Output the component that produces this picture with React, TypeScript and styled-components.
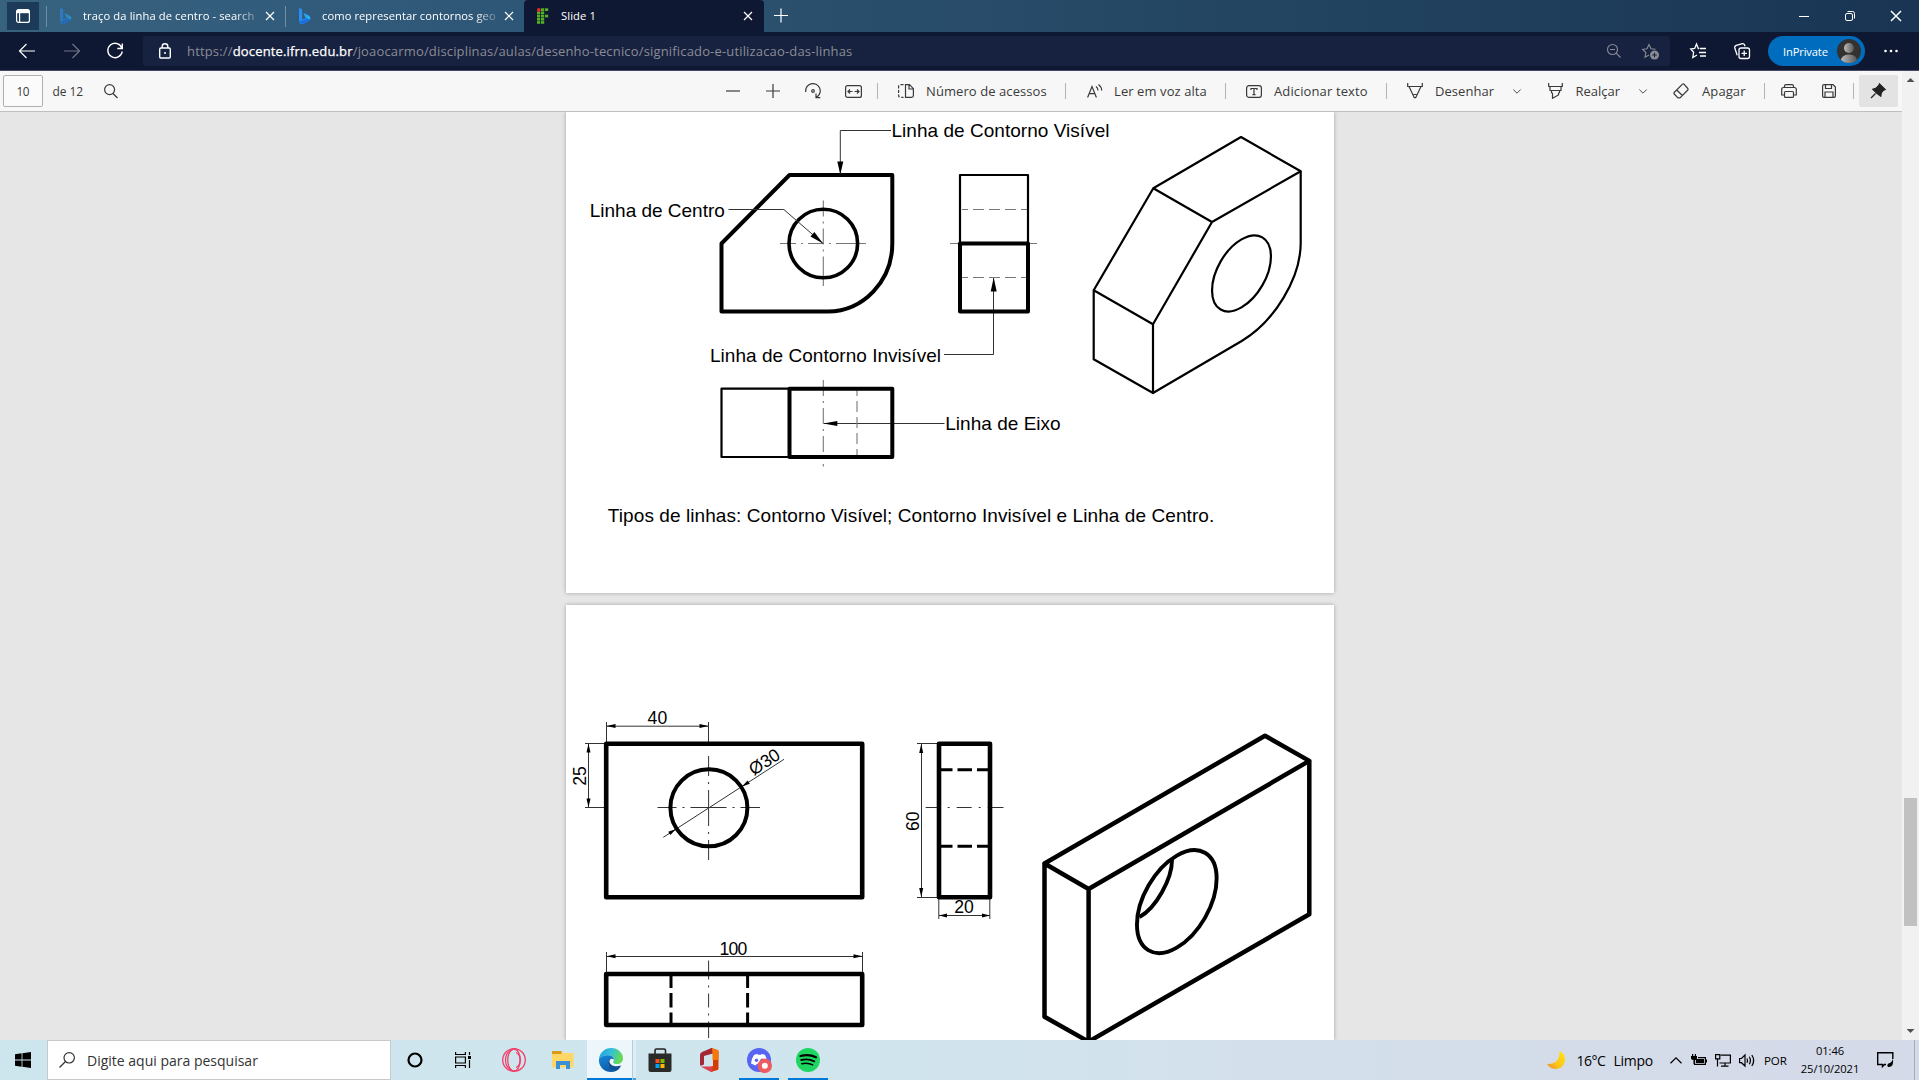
import React from "react";
import styled, { createGlobalStyle } from "styled-components";

const GlobalStyle = createGlobalStyle`
  *, *::before, *::after { box-sizing: border-box; }
  html, body { margin: 0; padding: 0; height: 100%; overflow: hidden; }
  body { font-family: "Segoe UI", "Open Sans", "Noto Sans", sans-serif; }
  svg { display: block; flex: none; }
`;

const Screen = styled.div`
  display: flex;
  flex-direction: column;
  width: 1919px;
  height: 1080px;
  overflow: hidden;
  background: #e6e6e6;
`;

/* ---------- generic parts ---------- */

const Glyph = styled.svg<{ $ml?: number; $sw?: number }>`
  margin-left: ${(p) => p.$ml ?? 0}px;
  fill: none;
  stroke: currentColor;
  stroke-width: ${(p) => p.$sw ?? 1.2};
  overflow: visible;
`;

const Label = styled.span<{ $w: number; $ml?: number; $ls?: number }>`
  flex: none;
  width: ${(p) => p.$w}px;
  margin-left: ${(p) => p.$ml ?? 0}px;
  letter-spacing: ${(p) => p.$ls ?? 0}px;
  white-space: nowrap;
`;

/* ---------- tab strip ---------- */

const TabStrip = styled.header`
  display: flex;
  flex: none;
  height: 32px;
  background: linear-gradient(90deg, #38637f 0%, #30597a 20%, #294e6b 45%, #21425f 72%, #1a3554 100%);
  color: #fff;
  font-size: 11.2px;
`;

const TabActions = styled.div`
  display: flex;
  align-items: center;
  justify-content: center;
  width: 32px;
  height: 28px;
  margin: 2px 7px 0 7px;
  background: #1c3b59;
`;

const Tab = styled.div<{ $w: number; $active?: boolean }>`
  display: flex;
  flex: none;
  align-items: center;
  width: ${(p) => p.$w}px;
  height: 32px;
  padding-left: 13px;
  background: ${(p) => (p.$active ? "#0f1833" : "transparent")};
  border-radius: ${(p) => (p.$active ? "4px 4px 0 0" : "0")};
`;

const TabDivider = styled.div`
  flex: none;
  width: 1px;
  height: 21px;
  margin-top: 6px;
  background: #6f8fa5;
`;

const TabTitle = styled(Label)<{ $fade?: boolean }>`
  line-height: 18px;
  mask-image: ${(p) => (p.$fade ? "linear-gradient(90deg, #000 88%, rgba(0, 0, 0, 0.2) 101%)" : "none")};
`;

const WindowButtons = styled.div`
  display: flex;
  align-items: center;
  gap: 36px;
  margin-left: auto;
  padding-right: 18px;
`;

/* ---------- address row ---------- */

const AddressRow = styled.div`
  display: flex;
  flex: none;
  align-items: center;
  height: 39px;
  padding: 0 21px 0 18px;
  background: #0f1833;
  border-bottom: 1px solid #464866;
  color: #fff;
`;

const AddressBox = styled.div`
  display: flex;
  align-items: center;
  width: 1527px;
  height: 30px;
  margin-left: 20px;
  padding: 0 11px 0 15px;
  border-radius: 3px;
  background: #172241;
  font-size: 13px;
`;

const Url = styled.div`
  margin: 0 auto 0 16px;
  color: #8b8c93;
  letter-spacing: 0.165px;
  white-space: nowrap;

  b { color: #fff; font-weight: 400; -webkit-text-stroke: 0.25px #fff; }
`;

const Profile = styled.div`
  display: flex;
  align-items: center;
  justify-content: space-between;
  width: 97px;
  height: 30px;
  margin-left: 18px;
  padding: 0 4px 0 15px;
  border-radius: 15px;
  background: #006cbe;
  font-size: 11.2px;
  letter-spacing: -0.15px;
`;

/* ---------- pdf toolbar ---------- */

const Viewer = styled.main`
  display: flex;
  flex: none;
  height: 969px;
`;

const Document = styled.section`
  display: flex;
  flex-direction: column;
  width: 1902px;
`;

const PdfBar = styled.div`
  display: flex;
  flex: none;
  align-items: center;
  height: 41px;
  padding: 0 4px 0 3px;
  border-bottom: 1px solid #bfbfbf;
  background: #f7f7f7;
  color: #3a3a3a;
  font-size: 13px;
  letter-spacing: 0.08px;
`;

const PageInput = styled.div`
  display: flex;
  align-items: center;
  justify-content: center;
  width: 40px;
  height: 32px;
  border: 1px solid #b0b0b0;
  border-radius: 2px;
  background: #fbfbfb;
  font-size: 11.8px;
  letter-spacing: -0.4px;
`;

const PageCount = styled(Label)`
  font-size: 12px;
`;

const Rule = styled.div<{ $ml: number }>`
  flex: none;
  width: 1px;
  height: 16px;
  margin-left: ${(p) => p.$ml}px;
  background: #b4b4b4;
`;

const PinButton = styled.div`
  display: flex;
  align-items: center;
  justify-content: center;
  width: 40px;
  height: 32px;
  margin-left: 5px;
  border-radius: 2px;
  background: #e3e3e3;
  color: #222;
`;

/* ---------- pages ---------- */

const Pages = styled.div`
  display: flex;
  flex: 1;
  flex-direction: column;
  gap: 12px;
  min-height: 0;
  overflow: hidden;
  padding-left: 566px;
  background: #e6e6e6;
`;

const Sheet = styled.article<{ $h: number }>`
  flex: none;
  width: 768px;
  height: ${(p) => p.$h}px;
  background: #fff;
  box-shadow: 0 0 4px rgba(0, 0, 0, 0.3);
`;

const Drawing = styled.svg`
  fill: none;
  stroke: #000;
  stroke-linejoin: round;

  text {
    fill: #000;
    stroke: none;
    font-family: Arial, "Liberation Sans", sans-serif;
  }
  .thin { stroke: #333; stroke-width: 1; }
  .axis { stroke: #777; stroke-width: 1.1; }
  .mid { stroke-width: 2.2; }
  .thick { stroke-width: 4; }
  .heavy { stroke-width: 4.6; }
  .head { fill: #000; stroke: none; }
`;

const Scrollbar = styled.aside`
  display: flex;
  flex-direction: column;
  align-items: center;
  width: 17px;
  padding: 7px 0 7px;
  background: #f1f1f1;
`;

const Thumb = styled.div`
  width: 13px;
  height: 128px;
  margin: 716px 0 auto;
  background: #c1c1c1;
`;

const Arrow = styled.div<{ $down?: boolean }>`
  width: 8px;
  height: 4px;
  background: #505050;
  clip-path: ${(p) => (p.$down ? "polygon(0 0, 100% 0, 50% 100%)" : "polygon(0 100%, 100% 100%, 50% 0)")};
`;

/* ---------- taskbar ---------- */

const Taskbar = styled.footer`
  display: flex;
  flex: none;
  align-items: center;
  height: 40px;
  background: linear-gradient(90deg, #cde6ee 0%, #d0e5ee 45%, #d3e0ec 65%, #d4dbe9 85%, #d5dae9 100%);
  color: #000;
  font-size: 14px;
`;

const TaskSearch = styled.div`
  display: flex;
  align-items: center;
  width: 344px;
  height: 40px;
  margin-left: 16px;
  padding-left: 11px;
  border: 1px solid #c9c9c9;
  background: #fff;
  color: #333;
`;

const TaskSlot = styled.div<{ $w: number; $ml?: number; $open?: boolean; $active?: boolean }>`
  display: flex;
  flex: none;
  align-items: center;
  justify-content: center;
  width: ${(p) => p.$w}px;
  height: 40px;
  margin-left: ${(p) => p.$ml ?? 0}px;
  padding-left: ${(p) => (p.$active ? 3 : 0)}px;
  background: ${(p) => (p.$active ? "#edf6fa" : "transparent")};
  box-shadow: ${(p) => (p.$open || p.$active ? "inset 0 -2px 0 #0078d7" : "none")};
`;

const StackedEdge = styled.div`
  width: 4px;
  height: 40px;
  border-left: 1px solid #b5cdd6;
  background: #dcedf3;
  box-shadow: inset 0 -2px 0 #429ce0;
`;

const Tray = styled.div`
  display: flex;
  align-items: center;
  height: 40px;
  margin-left: auto;
`;

const Lang = styled(Label)`
  font-size: 11.6px;
`;

const Clock = styled.div`
  display: flex;
  flex-direction: column;
  align-items: center;
  width: 60px;
  margin-left: 12px;
  font-size: 11.2px;
  line-height: 18px;
  letter-spacing: -0.1px;
`;

const DesktopEdge = styled.div`
  width: 5px;
  height: 40px;
  margin-left: 20px;
  border-left: 1px solid #a5adbb;
`;

/* ---------- small icons ---------- */

const Close = ({ ml, size = 8 }: { ml?: number; size?: number }) => (
  <Glyph $ml={ml} width={size} height={size} viewBox="0 0 8 8">
    <path d="M0 0 8 8M8 0 0 8" />
  </Glyph>
);

const Bing = ({ dim }: { dim?: boolean }) => (
  <Glyph width="12" height="16" viewBox="0 0 12 16" opacity={dim ? 0.55 : 1}>
    <defs>
      <linearGradient id="bing" x1="0" y1="0" x2="1" y2="1">
        <stop offset="0" stopColor="#2b8df0" />
        <stop offset="1" stopColor="#1fc8f4" />
      </linearGradient>
    </defs>
    <g stroke="none">
      <path d="M0 0 3.2 1.3V11.5L0 13.8Z" fill="#2a8df0" />
      <path d="M4.5 4.8 10 7.7Q12 9 11.2 11.6L3.6 15.9Q.5 16 0 13.4L7 9.8 5.8 8.5Z" fill="url(#bing)" />
      <path d="M0 12Q1 13.6 3.2 12.4L7.2 10 11 11.5Q10.7 12.4 9.8 13L5 15.8Q.4 16.8 0 12Z" fill="#1b6fe6" />
    </g>
  </Glyph>
);

const ifrnCells = [[1, 0], [2, 0], [0, 1], [1, 1], [0, 2], [1, 2], [2, 2], [0, 3], [1, 3], [0, 4], [1, 4]];

const IfrnMark = () => (
  <Glyph width="12" height="16" viewBox="0 0 12 16">
    <g stroke="none" fill="#55b022">
      {ifrnCells.map(([x, y]) => (
        <rect key={`${x}-${y}`} x={x * 4} y={0.3 + y * 3.2} width="3.2" height="2.7" />
      ))}
      <circle cx="1.8" cy="1.9" r="1.9" fill="#e3262c" />
    </g>
  </Glyph>
);

const Chevron = ({ ml }: { ml: number }) => (
  <Glyph $ml={ml} $sw={0.9} width="8" height="5" viewBox="0 0 8 5">
    <path d="M.3 .5 4 4.2 7.7 .5" />
  </Glyph>
);

/* ---------- arrowheads for the drawings ---------- */

const Head = ({ x, y, a, l = 9, w = 2 }: { x: number; y: number; a: number; l?: number; w?: number }) => (
  <path className="head" d={`M0 0L${-l} ${-w}V${w}Z`} transform={`translate(${x} ${y}) rotate(${a})`} />
);

const FirstSheet = () => (
  <Drawing width="768" height="481" viewBox="566 112 768 481">
    <path className="axis" d="M780 243.5H866" strokeDasharray="16 5 2 5 16 5 2 5 30" />
    <path className="axis" d="M823.3 200.5V286" strokeDasharray="16 5 2 5 16 5 2 5 30" />
    <path className="thick" d="M721.5 243.5 789.5 175H892.3V243.5A65 68 0 0 1 828 311.5H721.5Z" />
    <ellipse strokeWidth="3.6" cx="823.3" cy="243.5" rx="34.3" ry="34.2" />
    <path className="thin" d="M891 130.5H840.3V174M728.5 209.5H783.8L823 243.5M944 354.5H993.5V278M944.5 423.5H824" />
    <Head x={840.3} y={174.5} a={90} l={13} w={3} />
    <Head x={823} y={243.5} a={41} l={14} w={3} />
    <Head x={993.7} y={277.5} a={-90} l={14} w={3} />
    <Head x={823.3} y={423.5} a={180} l={14} w={2.4} />

    <path className="axis" d="M950 243.5H1037" />
    <path className="axis" d="M962 209.5H1028M962 277.5H1028" strokeDasharray="11 5" strokeDashoffset="5" />
    <path className="mid" d="M960 243.5V175H1028V243.5" />
    <path className="thick" d="M960 243.5H1028V311.5H960Z" />

    <path className="axis" d="M823.3 380V466.5" strokeDasharray="16 5 2 5" />
    <path className="axis" d="M857 390V456" strokeDasharray="11 5" strokeDashoffset="5" />
    <path className="mid" d="M789.5 388.7H721.5V457H789.5" />
    <path className="thick" d="M789.5 388.7H892.3V457H789.5Z" />

    <g fontSize="19">
      <text x="891.5" y="137.2" textLength="218">Linha de Contorno Visível</text>
      <text x="589.8" y="216.8" textLength="135">Linha de Centro</text>
      <text x="710" y="361.5" textLength="231">Linha de Contorno Invisível</text>
      <text x="945.2" y="430.2" textLength="115.5">Linha de Eixo</text>
      <text x="607.8" y="521.8" textLength="606.5">
        Tipos de linhas: Contorno Visível; Contorno Invisível e Linha de Centro.
      </text>
    </g>

    <g className="mid">
      <path d="M1153.3 188.3 1241 137 1300.7 171.3 1212 222ZM1153.3 188.3 1093.7 290.3 1153 324.3 1212 222M1093.7 290.3V359.3L1153 393V324.3" />
      <path d="M1300.7 171.3V243C1300.7 278 1274.4 321.7 1241.7 341L1153 393" />
      <circle r="34" transform="matrix(.866 -.5 0 1 1241.5 273.4)" vectorEffect="non-scaling-stroke" />
    </g>
  </Drawing>
);

const SecondSheet = () => (
  <Drawing width="768" height="435" viewBox="566 605 768 435">
    <g className="thin">
      <path d="M606.5 722V742M708.5 722V742M606.5 726.2H708.5" />
      <path d="M585 743.5H604M585 807.5H604M588.5 743.5V807.5" />
      <path d="M663.3 837.3 784 759.3" />
      <path d="M917 743.5H937M917 897.5H937M921.5 743.5V897.5" />
      <path d="M938.8 899V919M989.8 899V919M939 915.5H990" />
      <path d="M606.5 952V972M862.5 952V972M606.5 956.5H862.5" />
      <path d="M657.5 807.5H760" strokeDasharray="19 6 2 6 36 6 2 6 30" />
      <path d="M708.6 756V860" strokeDasharray="20 6 2 6 36 6 2 6 30" />
      <path d="M925.7 807.5H1003.5" strokeDasharray="15 7 2 7 15 7 2 7 30" />
      <path d="M708.6 960.5V1038" strokeDasharray="19 6 2 6 14 6 2 6 30" />
    </g>
    <Head x={606.5} y={726} a={180} />
    <Head x={708.5} y={726} a={0} />
    <Head x={588.5} y={743.5} a={-90} />
    <Head x={588.5} y={807.5} a={90} />
    <Head x={742} y={786.5} a={147} l={8} />
    <Head x={676} y={829} a={-33} l={8} />
    <Head x={921.2} y={744} a={-90} />
    <Head x={921.2} y={897} a={90} />
    <Head x={939} y={915.5} a={180} l={8} />
    <Head x={990} y={915.5} a={0} l={8} />
    <Head x={606.5} y={956.3} a={180} />
    <Head x={862.5} y={956.3} a={0} />

    <g className="heavy">
      <rect x="606.2" y="743.7" width="256" height="153.6" />
      <rect x="939" y="743.7" width="51" height="153.6" />
      <rect x="606.2" y="974" width="256" height="51" />
    </g>
    <circle className="thick" cx="708.9" cy="807.8" r="38.5" />
    <g strokeWidth="3">
      <path d="M941 769.7H988M941 846.3H988" strokeDasharray="11.5 5 14.5 5" />
      <path d="M671 976V1023M747.6 976V1023" strokeDasharray="12 5 14.5 5" />
    </g>

    <g fontSize="17.6" textAnchor="middle">
      <text x="657.4" y="724.4">40</text>
      <text x="964" y="913.2">20</text>
      <text x="733.4" y="955" textLength="28">100</text>
      <text transform="translate(586.2 776) rotate(-90)">25</text>
      <text transform="translate(918.8 821.3) rotate(-90)">60</text>
      <text transform="translate(767.6 767) rotate(-33)">Ø30</text>
    </g>

    <g strokeWidth="4.5">
      <path d="M1044.5 863.5 1265 735.7 1309.3 760.9 1088.6 889ZM1309.3 760.9V914.3L1088.6 1041.6V889M1044.5 863.5V1016.7L1088.6 1041.6" />
      <circle r="46" transform="matrix(.866 -.5 0 1 1176.8 901.6)" vectorEffect="non-scaling-stroke" strokeWidth="3.9" />
      <path d="M1172 860C1172 879 1156 908 1139.5 917" strokeWidth="3.9" />
    </g>
  </Drawing>
);

/* ---------- page sections ---------- */

const BrowserTabs = () => (
  <TabStrip>
    <TabActions>
      <Glyph width="14" height="14" viewBox="0 0 14 14">
        <rect x=".6" y=".6" width="12.8" height="12.8" rx="2" />
        <path d="M1 2.500H13" strokeWidth="3.4" />
        <path d="M3.600 4V13" />
      </Glyph>
    </TabActions>
    <TabDivider />
    <Tab $w={238}>
      <Bing dim />
      <TabTitle $w={173} $ml={11} $ls={0.1} $fade>traço da linha de centro - search</TabTitle>
      <Close ml={9.5} />
    </Tab>
    <TabDivider />
    <Tab $w={238}>
      <Bing />
      <TabTitle $w={174} $ml={11} $ls={0.06} $fade>como representar contornos geo</TabTitle>
      <Close ml={8.5} />
    </Tab>
    <Tab $w={240} $active>
      <IfrnMark />
      <TabTitle $w={174} $ml={12} $ls={0.1}>Slide 1</TabTitle>
      <Close ml={8.5} />
    </Tab>
    <Glyph $ml={10} width="14" height="32" viewBox="0 0 14 32">
      <path d="M0 15.500H14M7 8.500V22.500" />
    </Glyph>
    <WindowButtons>
      <Glyph $sw={1} width="10" height="10" viewBox="0 0 10 10"><path d="M0 5.500H10" /></Glyph>
      <Glyph $sw={1} width="10" height="10" viewBox="0 0 10 10">
        <rect x=".5" y="2.5" width="7" height="7" rx="1.5" />
        <path d="M2.500 .5H7.500Q9.500 .5 9.500 2.500V7.500" />
      </Glyph>
      <Close size={10} />
    </WindowButtons>
  </TabStrip>
);

const Navigation = () => (
  <AddressRow>
    <Glyph width="18" height="16" viewBox="0 0 18 16"><path d="M17 8H1.500M8.500 1 1.500 8 8.500 15" /></Glyph>
    <Glyph $ml={27} width="18" height="16" viewBox="0 0 18 16" opacity=".4"><path d="M1 8H16.500M9.500 1 16.500 8 9.500 15" /></Glyph>
    <Glyph $ml={26} $sw={1.4} width="16" height="16" viewBox="0 0 16 16">
      <path d="M15 5.500A7.200 7.200 0 1 0 15.200 8.500M15.300 .5V5.500H10.300" />
    </Glyph>
    <AddressBox>
      <Glyph $ml={1} $sw={1.4} width="12" height="16" viewBox="0 0 12 16">
        <rect x=".7" y="5" width="10.6" height="10" rx="1.2" />
        <path d="M3.200 5V3.300Q3.200 .7 6 .7T8.800 3.300V5" />
        <circle cx="6" cy="10" r="1" fill="currentColor" stroke="none" />
      </Glyph>
      <Url>https://<b>docente.ifrn.edu.br</b>/joaocarmo/disciplinas/aulas/desenho-tecnico/significado-e-utilizacao-das-linhas</Url>
      <Glyph $sw={1.1} width="14" height="14" viewBox="0 0 14 14" color="#8b8c93">
        <circle cx="5.5" cy="5.5" r="5" /><path d="M3 5.500H8M9.200 9.200 13.500 13.500" />
      </Glyph>
      <Glyph $ml={21} $sw={1.1} width="17" height="17" viewBox="0 0 17 17" color="#8b8c93">
        <path d="M7 12 3 14.200 3.900 9.500 .6 6.300 5 5.700 7 1.500 9 5.700 13.500 6.300" />
        <circle cx="12.5" cy="12" r="4.5" fill="currentColor" stroke="none" />
        <path d="M12.500 9.700V14.300M10.200 12H14.800" stroke="#172241" />
      </Glyph>
    </AddressBox>
    <Glyph $ml={20} $sw={1.3} width="16" height="16" viewBox="0 0 16 16">
      <path d="M9.300 5.500H8.300L6.500 1 4.700 5.500 .7 6 3.600 9.300 2.800 14.500 7 12" /><path d="M10 5.500H16M9 9.500H16M10 13H16" />
    </Glyph>
    <Glyph $ml={28} $sw={1.3} width="16" height="16" viewBox="0 0 16 16">
      <rect x="5" y="5" width="10.5" height="10.5" rx="2" /><path d="M10.200 7.500V13M7.500 10.300H13" />
      <path d="M3.200 12.300 .8 5Q.4 3 2.300 2.300L8.500 .7Q10 .5 10.600 2L11 3.200" />
    </Glyph>
    <Profile>
      InPrivate
      <svg width="24" height="24" viewBox="0 0 24 24">
        <defs>
          <linearGradient id="face"><stop offset="0" stopColor="#bdbdbd" /><stop offset="1" stopColor="#555" /></linearGradient>
          <clipPath id="round"><circle cx="12" cy="12" r="12" /></clipPath>
        </defs>
        <g clipPath="url(#round)">
          <rect width="24" height="24" fill="#333230" />
          <circle cx="12" cy="9" r="5" fill="url(#face)" />
          <path d="M3.500 24Q3.500 15.500 12 15.500T20.500 24Z" fill="url(#face)" />
        </g>
      </svg>
    </Profile>
    <Glyph $ml={19} width="14" height="4" viewBox="0 0 14 4">
      <g fill="currentColor" stroke="none">
        <circle cx="1.5" cy="2" r="1.3" /><circle cx="7" cy="2" r="1.3" /><circle cx="12.5" cy="2" r="1.3" />
      </g>
    </Glyph>
  </AddressRow>
);

const PdfToolbar = () => (
  <PdfBar>
    <PageInput>10</PageInput>
    <PageCount $w={30} $ml={10} $ls={-0.1}>de 12</PageCount>
    <Glyph $ml={21} width="14" height="15" viewBox="0 0 14 15"><circle cx="5.6" cy="5.6" r="5" /><path d="M9 9.500 13.500 14" /></Glyph>
    <Glyph $ml={608} width="14" height="14" viewBox="0 0 14 14"><path d="M0 7H14" /></Glyph>
    <Glyph $ml={26} width="14" height="14" viewBox="0 0 14 14"><path d="M0 7H14M7 0V14" /></Glyph>
    <Glyph $ml={25} width="16" height="16" viewBox="0 0 16 16">
      <path d="M.7 9A7.300 7.300 0 1 1 11.500 14.200M11 10.500V14.700H15.300" /><circle cx="8" cy="8" r="1.3" />
    </Glyph>
    <Glyph $ml={24} width="17" height="13" viewBox="0 0 17 13">
      <rect x=".6" y=".6" width="15.8" height="11.8" rx="2" />
      <path d="M3 6.500H7.500M9.500 6.500H14M5 4.500 3 6.500 5 8.500M12 4.500 14 6.500 12 8.500" />
    </Glyph>
    <Rule $ml={15} />
    <Glyph $ml={20} width="16" height="14" viewBox="0 0 16 14">
      <path d="M7.500 .7H11.500L15.400 4.700V11.500Q15.400 13.300 13.600 13.300H7.500ZM11 .7V5H15.400" />
      <path d="M5.500 .7H2.500Q.6 .7 .6 2.500V11.500Q.6 13.300 2.500 13.300H5.500" strokeDasharray="3 1.5" />
    </Glyph>
    <Label $w={120} $ml={12.5} $ls={0.08}>Número de acessos</Label>
    <Rule $ml={18.5} />
    <Glyph $ml={21} width="16" height="14" viewBox="0 0 16 14">
      <path d="M.6 13.500 5 2.500 9.400 13.500M2.200 9.700H7.800" /><path d="M9 2.500Q11 4 11 6.500M11.500 .5Q14.700 3 14.700 6.500" />
    </Glyph>
    <Label $w={93} $ml={11.5} $ls={0.08}>Ler em voz alta</Label>
    <Rule $ml={17.5} />
    <Glyph $ml={20} width="16" height="13" viewBox="0 0 16 13">
      <rect x=".6" y=".6" width="14.8" height="11.8" rx="2.5" /><path d="M5 5V3.500H11V5M8 3.500V9.700M6.500 9.700H9.500" />
    </Glyph>
    <Label $w={94} $ml={12.5} $ls={0.12}>Adicionar texto</Label>
    <Rule $ml={17.5} />
    <Glyph $ml={20} width="16" height="16" viewBox="0 0 16 16">
      <path d="M.7 0V3.500H15.300V0M2 3.500 7.300 14.700H8.700L14 3.500M6.500 11.500H9.500" />
    </Glyph>
    <Label $w={58} $ml={12.5} $ls={0.05}>Desenhar</Label>
    <Chevron ml={19.5} />
    <Glyph $ml={27} width="15" height="16" viewBox="0 0 15 16">
      <path d="M.7 0V3.500H14.300V0M2 3.500V7.500H13V3.500M3.500 7.500V9.500L4.500 10.500V15.300L10.500 12V10.500L11.500 9.500V7.500" />
    </Glyph>
    <Label $w={44} $ml={13}>Realçar</Label>
    <Chevron ml={19} />
    <Glyph $ml={26} width="16" height="16" viewBox="0 0 16 16">
      <path d="M9.500 1.200 1.200 9.500Q.5 10.300 1.200 11L5 14.800H7L14.800 7Q15.500 6.300 14.800 5.500L11 1.200Q10.200 .5 9.500 1.200ZM3.800 7 9.300 12.500" />
    </Glyph>
    <Label $w={45} $ml={13.5} $ls={0.1}>Apagar</Label>
    <Rule $ml={16.5} />
    <Glyph $ml={16} width="16" height="14" viewBox="0 0 16 14">
      <path d="M3.500 3.500V2Q3.500 .6 5 .6H11Q12.500 .6 12.500 2V3.500M3.500 11H.7V5.500Q.7 3.500 2.700 3.500H13.300Q15.300 3.500 15.300 5.500V11H12.500" />
      <rect x="3.5" y="7.5" width="9" height="5.9" rx="1" />
    </Glyph>
    <Glyph $ml={25} width="14" height="14" viewBox="0 0 14 14">
      <path d="M.6 2Q.6 .6 2 .6H11L13.400 3V12Q13.400 13.400 12 13.400H2Q.6 13.400 .6 12ZM3.500 .6V4.500H9.500V.6M3 13.400V8H11V13.400" />
    </Glyph>
    <Rule $ml={17} />
    <PinButton>
      <Glyph width="16" height="16" viewBox="0 0 16 16">
        <path d="M9.500 .8 15.200 6.500 13.500 7.200 11.300 10 10.800 13.200 6.800 10.200 2.800 6.300 6.300 5 8.800 2.500Z" fill="currentColor" />
        <path d="M5.500 10.500 1 15" />
      </Glyph>
    </PinButton>
  </PdfBar>
);

const AppTaskbar = () => (
  <Taskbar>
    <Glyph $ml={15} width="16" height="16" viewBox="0 0 16 16">
      <path fill="#000" stroke="none" d="M0 2.200 6.600 1.300V7.600H0ZM7.400 1.200 16 0V7.600H7.400ZM0 8.400H6.600V14.700L0 13.800ZM7.400 8.400H16V16L7.400 14.800Z" />
    </Glyph>
    <TaskSearch>
      <Glyph width="16" height="16" viewBox="0 0 16 16"><circle cx="10.2" cy="5.8" r="5.2" /><path d="M6.500 9.500 .5 15.500" /></Glyph>
      <Label $w={180} $ml={12}>Digite aqui para pesquisar</Label>
    </TaskSearch>
    <Glyph $ml={16} $sw={2.2} width="16" height="16" viewBox="0 0 16 16"><circle cx="8" cy="8" r="6.5" /></Glyph>
    <Glyph $ml={32} width="16" height="16" viewBox="0 0 16 16">
      <path d="M.6 0V2.500H10.400V0M.6 16V13.500H10.400V16M.6 5H10.400V11H.6ZM14.500 0V3M14.500 8V16" />
      <rect x="13" y="4" width="3" height="3" fill="#000" stroke="none" />
    </Glyph>
    <TaskSlot $w={48} $ml={19}>
      <Glyph $sw={1.3} width="24" height="24" viewBox="0 0 24 24" color="#f0406a">
        <circle cx="12" cy="12" r="11.3" /><ellipse cx="12" cy="12" rx="6.3" ry="11" />
        <path d="M11 1.200Q3.500 4 3.500 12T11 22.800M14 4.500Q18 6 18 12T14 19.500" />
      </Glyph>
    </TaskSlot>
    <TaskSlot $w={48} $ml={1}>
      <Glyph width="22" height="20" viewBox="0 0 22 20">
        <g stroke="none">
          <path d="M0 1H9L11 3H21.500V17.500H0Z" fill="#ffd766" /><path d="M0 1H9.500V4H0Z" fill="#d99b16" />
          <path d="M4 11H18V19H14V15H8V19H4Z" fill="#3a8fd6" />
        </g>
      </Glyph>
    </TaskSlot>
    <TaskSlot $w={45} $active>
      <svg width="24" height="24" viewBox="0 0 24 24">
        <defs>
          <linearGradient id="wave" x1="0" y1="0" x2="1" y2=".3"><stop offset="0" stopColor="#1b9de2" /><stop offset=".55" stopColor="#35c1d5" /><stop offset="1" stopColor="#66d957" /></linearGradient>
          <linearGradient id="body" x1="0" y1="0" x2=".6" y2="1"><stop offset="0" stopColor="#1687d9" /><stop offset="1" stopColor="#0c59a4" /></linearGradient>
        </defs>
        <path d="M0 11.500C.5 4.500 6 0 12.200 0 19 0 24 5 24 10.200 24 13.800 21.300 16 18 16 15.500 16 14 15 14 14.200 14 13.500 15 13.200 15 11.500 15 9 12.500 7.300 9 7.300 5 7.300 1.500 8.500 0 11.500Z" fill="url(#wave)" />
        <path d="M0 11.500C1.500 8.300 5 7.300 8.800 7.300 12.500 7.300 15 9.300 15 11.500 12 9.500 9 11.500 9 15.200 9 20.500 15 22.300 21.500 19 19.500 22.200 16 24 12 24 5 24-.5 18.500 0 11.500Z" fill="url(#body)" />
        <path d="M9 15C9 12.500 10.500 10.600 12 10.600 8 14 12.500 20.500 22.300 17.500 18 24.500 9 23 9 15Z" fill="#104f91" />
      </svg>
    </TaskSlot>
    <StackedEdge />
    <TaskSlot $w={48}>
      <svg width="24" height="24" viewBox="0 0 24 24">
        <path d="M7 6V2.500Q7 1 8.500 1H16Q17.500 1 17.500 2.500V6" fill="none" stroke="#222" strokeWidth="1.6" />
        <path d="M.5 5.500H23.500V22Q23.500 24 21.500 24H2.500Q.5 24 .5 22Z" fill="#2a2a2a" />
        <path d="M7.500 11H11.500V15H7.500Z" fill="#f25022" /><path d="M12.500 11H16.500V15H12.500Z" fill="#7fba00" />
        <path d="M7.500 16H11.500V20H7.500Z" fill="#00a4ef" /><path d="M12.500 16H16.500V20H12.500Z" fill="#ffb900" />
      </svg>
    </TaskSlot>
    <TaskSlot $w={48} $ml={1}>
      <svg width="20" height="24" viewBox="0 0 20 24">
        <path d="M12 0 18.500 2Q19.500 2.400 19.500 3.500V20.500Q19.500 21.600 18.500 22L12 24V18.500L14 18V5.500L9 6.500Z" fill="#d83b01" />
        <path d="M12.500 0 3 4Q1 5 1 7V16.500Q1 18 2.500 17.500L5 16.500V8L13.500 5.500V0Z" fill="#a32a35" />
        <path d="M1.500 18.500H13.500V23.500L12 24Z" fill="#dc4351" />
        <path d="M13 0 18.500 2Q19.500 2.400 19.500 3.500V12H13.500V5Z" fill="#f3790f" />
      </svg>
    </TaskSlot>
    <TaskSlot $w={40} $ml={6} $open>
      <svg width="26" height="26" viewBox="0 0 26 26">
        <circle cx="13" cy="13" r="12" fill="#5865f2" />
        <path d="M8 8Q10 7 11.500 7L12 7.800H15L15.500 7Q17 7 19 8 21.500 12 21 16.500L17.500 18.500 16 16.800H11L9.500 18.500 5 16.500Q5.500 11.500 8 8Z" fill="#fff" />
        <circle cx="10.5" cy="13.3" r="1.7" fill="#5865f2" /><circle cx="16" cy="13.3" r="1.7" fill="#5865f2" />
        <circle cx="18.8" cy="18.8" r="7.2" fill="#ed5b5f" /><circle cx="18.8" cy="18.8" r="3" fill="#fff" />
      </svg>
    </TaskSlot>
    <TaskSlot $w={40} $ml={9} $open>
      <svg width="24" height="24" viewBox="0 0 24 24">
        <circle cx="12" cy="12" r="12" fill="#1ed760" />
        <g fill="none" stroke="#000" strokeLinecap="round">
          <path d="M4.500 8Q13 5.700 20 9.300" strokeWidth="2.3" />
          <path d="M5.300 12Q12 10.200 18.300 13.300" strokeWidth="1.9" />
          <path d="M5.800 15.700Q12 14.300 16.700 16.900" strokeWidth="1.5" />
        </g>
      </svg>
    </TaskSlot>
    <Tray>
      <svg width="18" height="18" viewBox="0 0 18 18">
        <defs><linearGradient id="moon" x1="1" y1="0" x2="0" y2="1"><stop offset="0" stopColor="#ffe600" /><stop offset=".6" stopColor="#fdc41c" /><stop offset="1" stopColor="#f08a24" /></linearGradient></defs>
        <path d="M12.500 0Q18 2.500 18 9 17 17.500 9 18 3 18 0 13 5 13.500 9 10.500 13 7 12.500 0Z" fill="url(#moon)" />
      </svg>
      <Label $w={29} $ml={12} $ls={-0.5}>16°C</Label>
      <Label $w={39} $ml={8} $ls={-0.3}>Limpo</Label>
      <Glyph $ml={17} width="12" height="7" viewBox="0 0 12 7"><path d="M.5 6.300 6 .9 11.500 6.300" /></Glyph>
      <Glyph $ml={9} width="16" height="12" viewBox="0 0 16 12">
        <path d="M3.500 5V10.400H14.400V3.600H7" />
        <path d="M5 5H13V9H5ZM14 5.500H16V8.500H14ZM0 2H6V4.500Q5.500 6 3 6T0 4.500ZM1 0H2.200V2H1ZM3.800 0H5V2H3.800ZM2.500 5.500H3.700V10H2.500Z" fill="#000" stroke="none" />
      </Glyph>
      <Glyph $ml={8} width="16" height="13" viewBox="0 0 16 13">
        <path d="M5.500 1.200H15.400V9H4.500M10 9V12M6 12.200H13.500M2.500 5V12.500" /><path d="M.6 .6H4.800V4.800H.6Z" />
      </Glyph>
      <Glyph $ml={8} width="16" height="13" viewBox="0 0 16 13">
        <path d="M.6 4.500H2.500L6 1V12L2.500 8.700H.6ZM8 4.500Q9 6.500 8 8.700M10.300 2.800Q12.500 6.500 10.300 10.300M12.800 1Q16.500 6.500 12.800 12" />
      </Glyph>
      <Lang $w={24} $ml={9.5} $ls={-0.1}>POR</Lang>
      <Clock><span>01:46</span><span>25/10/2021</span></Clock>
      <Glyph $ml={17} $sw={1.4} width="17" height="16" viewBox="0 0 17 16">
        <path d="M9 12.500H7.500L5.500 14.500V12.500H.7V.7H15.800V7" />
        <path d="M16 7Q14.500 11 11.500 11.500 9.500 13 11 15 14 15.500 15.500 13 16.500 10 16 7Z" fill="#000" stroke="none" />
      </Glyph>
      <DesktopEdge />
    </Tray>
  </Taskbar>
);

export default function App() {
  return (
    <Screen>
      <GlobalStyle />
      <BrowserTabs />
      <Navigation />
      <Viewer>
        <Document>
          <PdfToolbar />
          <Pages>
            <Sheet $h={481}><FirstSheet /></Sheet>
            <Sheet $h={435}><SecondSheet /></Sheet>
          </Pages>
        </Document>
        <Scrollbar>
          <Arrow />
          <Thumb />
          <Arrow $down />
        </Scrollbar>
      </Viewer>
      <AppTaskbar />
    </Screen>
  );
}
